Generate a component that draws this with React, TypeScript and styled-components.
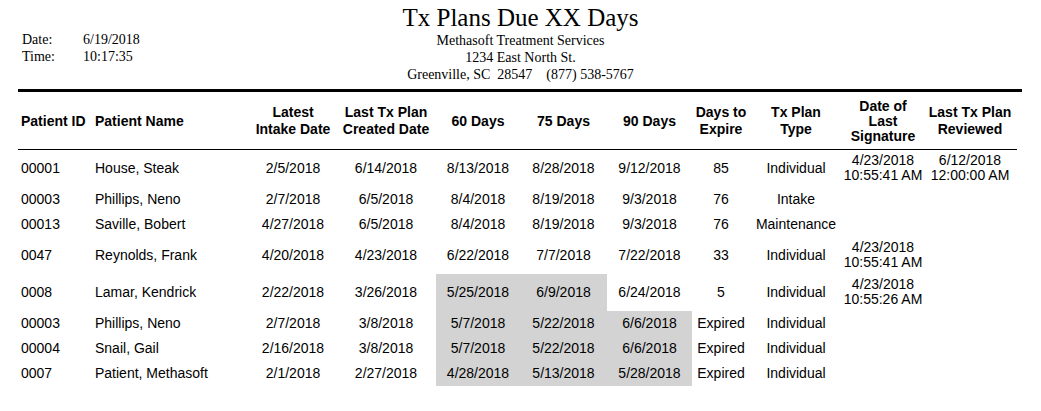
import * as React from 'react'
import styled, {createGlobalStyle} from 'styled-components'

const GlobalStyle = createGlobalStyle`
  html, body {
    margin: 0;
    padding: 0;
    background: #fff;
  }
  body {
    width: 1041px;
    color: #000;
  }
`

const COLS = '74px 158px 86px 100px 84px 87px 85px 58px 92px 82px 92px'

const Page = styled.div`
  width: 1041px;
  padding-top: 4px;
`

const Masthead = styled.div`
  display: grid;
  grid-template-columns: 1fr auto 1fr;
  font-family: "Liberation Serif", "Times New Roman", serif;
`

const StampBlock = styled.div`
  padding: 27px 0 0 22px;
  font-size: 14px;
  line-height: 17px;
  .line {
    display: flex;
  }
  .label {
    width: 61px;
  }
`

const TitleBlock = styled.div`
  text-align: center;
  font-size: 14px;
  line-height: 17px;
  white-space: pre;
  h1 {
    margin: 0;
    font-weight: normal;
    font-size: 25px;
    line-height: 28px;
  }
`

const Report = styled.div`
  margin: 6px 0 0 18px;
  width: 1004px;
  border-top: 3px solid #000;
  font-family: "Liberation Sans", Arial, sans-serif;
  font-size: 14px;
`

const HeadRow = styled.div`
  display: grid;
  grid-template-columns: ${COLS};
  width: 999px;
  height: 57px;
  align-items: center;
  border-bottom: 1px solid #000;
  font-weight: bold;
`

const HeadCell = styled.div<{$left?: boolean; $lh?: number}>`
  text-align: ${p => (p.$left ? 'left' : 'center')};
  padding-left: ${p => (p.$left ? '3px' : '0')};
  padding-top: 1px;
  line-height: ${p => p.$lh ?? 17}px;
  white-space: nowrap;
`

const Row = styled.div`
  display: grid;
  grid-template-columns: ${COLS};
  min-height: 25px;
`

const Cell = styled.div<{$left?: boolean; $shade?: boolean}>`
  display: flex;
  flex-direction: column;
  justify-content: center;
  align-items: ${p => (p.$left ? 'flex-start' : 'center')};
  padding: 3px 0 4px ${p => (p.$left ? '3px' : '0')};
  line-height: 15px;
  white-space: nowrap;
  background: ${p => (p.$shade ? '#d3d3d3' : 'transparent')};
`

type Plan = {
    id: string
    name: string
    intake: string
    created: string
    due: [string, string, string]
    expire: string
    type: string
    sig?: [string, string]
    reviewed?: [string, string]
    overdue: number
}

const plans: Plan[] = [
    {id: '00001', name: 'House, Steak', intake: '2/5/2018', created: '6/14/2018', due: ['8/13/2018', '8/28/2018', '9/12/2018'], expire: '85', type: 'Individual', sig: ['4/23/2018', '10:55:41 AM'], reviewed: ['6/12/2018', '12:00:00 AM'], overdue: 0},
    {id: '00003', name: 'Phillips, Neno', intake: '2/7/2018', created: '6/5/2018', due: ['8/4/2018', '8/19/2018', '9/3/2018'], expire: '76', type: 'Intake', overdue: 0},
    {id: '00013', name: 'Saville, Bobert', intake: '4/27/2018', created: '6/5/2018', due: ['8/4/2018', '8/19/2018', '9/3/2018'], expire: '76', type: 'Maintenance', overdue: 0},
    {id: '0047', name: 'Reynolds, Frank', intake: '4/20/2018', created: '4/23/2018', due: ['6/22/2018', '7/7/2018', '7/22/2018'], expire: '33', type: 'Individual', sig: ['4/23/2018', '10:55:41 AM'], overdue: 0},
    {id: '0008', name: 'Lamar, Kendrick', intake: '2/22/2018', created: '3/26/2018', due: ['5/25/2018', '6/9/2018', '6/24/2018'], expire: '5', type: 'Individual', sig: ['4/23/2018', '10:55:26 AM'], overdue: 2},
    {id: '00003', name: 'Phillips, Neno', intake: '2/7/2018', created: '3/8/2018', due: ['5/7/2018', '5/22/2018', '6/6/2018'], expire: 'Expired', type: 'Individual', overdue: 3},
    {id: '00004', name: 'Snail, Gail', intake: '2/16/2018', created: '3/8/2018', due: ['5/7/2018', '5/22/2018', '6/6/2018'], expire: 'Expired', type: 'Individual', overdue: 3},
    {id: '0007', name: 'Patient, Methasoft', intake: '2/1/2018', created: '2/27/2018', due: ['4/28/2018', '5/13/2018', '5/28/2018'], expire: 'Expired', type: 'Individual', overdue: 3},
]

function Lines(props: {value?: string[]}) {
    if (!props.value) return null
    return <>{props.value.map((v, i) => <span key={i}>{v}</span>)}</>
}

export default function App() {
    return (
        <Page>
            <GlobalStyle/>
            <Masthead>
                <StampBlock>
                    <div className='line'><span className='label'>Date:</span><span>6/19/2018</span></div>
                    <div className='line'><span className='label'>Time:</span><span>10:17:35</span></div>
                </StampBlock>
                <TitleBlock>
                    <h1>Tx Plans Due XX Days</h1>
                    <div>Methasoft Treatment Services</div>
                    <div>1234 East North St.</div>
                    <div>{'Greenville, SC  28547    (877) 538-5767'}</div>
                </TitleBlock>
                <div/>
            </Masthead>
            <Report>
                <HeadRow>
                    <HeadCell $left>Patient ID</HeadCell>
                    <HeadCell $left>Patient Name</HeadCell>
                    <HeadCell>Latest<br/>Intake Date</HeadCell>
                    <HeadCell>Last Tx Plan<br/>Created Date</HeadCell>
                    <HeadCell>60 Days</HeadCell>
                    <HeadCell>75 Days</HeadCell>
                    <HeadCell>90 Days</HeadCell>
                    <HeadCell>Days to<br/>Expire</HeadCell>
                    <HeadCell>Tx Plan<br/>Type</HeadCell>
                    <HeadCell $lh={15}>Date of<br/>Last<br/>Signature</HeadCell>
                    <HeadCell>Last Tx Plan<br/>Reviewed</HeadCell>
                </HeadRow>
                {plans.map((p, i) => (
                    <Row key={i}>
                        <Cell $left>{p.id}</Cell>
                        <Cell $left>{p.name}</Cell>
                        <Cell>{p.intake}</Cell>
                        <Cell>{p.created}</Cell>
                        {p.due.map((d, j) => (
                            <Cell key={j} $shade={j < p.overdue}>{d}</Cell>
                        ))}
                        <Cell>{p.expire}</Cell>
                        <Cell>{p.type}</Cell>
                        <Cell><Lines value={p.sig}/></Cell>
                        <Cell><Lines value={p.reviewed}/></Cell>
                    </Row>
                ))}
            </Report>
        </Page>
    )
}
